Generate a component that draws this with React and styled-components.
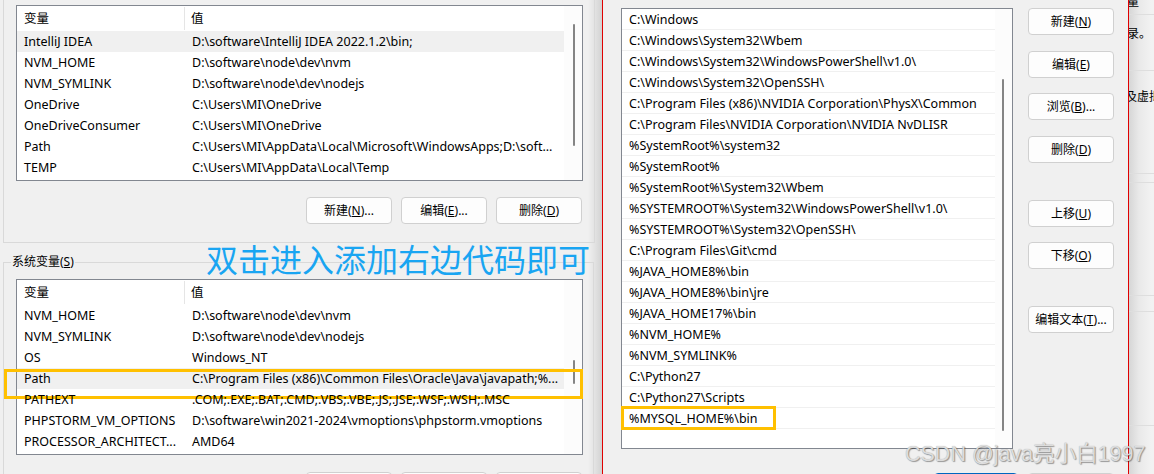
import React from "react";
import styled, { createGlobalStyle } from "styled-components";

const GlobalStyle = createGlobalStyle`
  html, body {
    margin: 0;
    padding: 0;
    background: #f0f0f0;
    overflow: hidden;
  }
  body {
    font-family: "Noto Sans", "Noto Sans CJK SC", sans-serif;
    font-size: 12px;
    color: #000;
  }
`;

const userVars = [
  ["IntelliJ IDEA", "D:\\software\\IntelliJ IDEA 2022.1.2\\bin;"],
  ["NVM_HOME", "D:\\software\\node\\dev\\nvm"],
  ["NVM_SYMLINK", "D:\\software\\node\\dev\\nodejs"],
  ["OneDrive", "C:\\Users\\MI\\OneDrive"],
  ["OneDriveConsumer", "C:\\Users\\MI\\OneDrive"],
  ["Path", "C:\\Users\\MI\\AppData\\Local\\Microsoft\\WindowsApps;D:\\soft..."],
  ["TEMP", "C:\\Users\\MI\\AppData\\Local\\Temp"],
];

const sysVars = [
  ["NVM_HOME", "D:\\software\\node\\dev\\nvm"],
  ["NVM_SYMLINK", "D:\\software\\node\\dev\\nodejs"],
  ["OS", "Windows_NT"],
  ["Path", "C:\\Program Files (x86)\\Common Files\\Oracle\\Java\\javapath;%..."],
  ["PATHEXT", ".COM;.EXE;.BAT;.CMD;.VBS;.VBE;.JS;.JSE;.WSF;.WSH;.MSC"],
  ["PHPSTORM_VM_OPTIONS", "D:\\software\\win2021-2024\\vmoptions\\phpstorm.vmoptions"],
  ["PROCESSOR_ARCHITECT...", "AMD64"],
];

const pathEntries = [
  "C:\\Windows",
  "C:\\Windows\\System32\\Wbem",
  "C:\\Windows\\System32\\WindowsPowerShell\\v1.0\\",
  "C:\\Windows\\System32\\OpenSSH\\",
  "C:\\Program Files (x86)\\NVIDIA Corporation\\PhysX\\Common",
  "C:\\Program Files\\NVIDIA Corporation\\NVIDIA NvDLISR",
  "%SystemRoot%\\system32",
  "%SystemRoot%",
  "%SystemRoot%\\System32\\Wbem",
  "%SYSTEMROOT%\\System32\\WindowsPowerShell\\v1.0\\",
  "%SYSTEMROOT%\\System32\\OpenSSH\\",
  "C:\\Program Files\\Git\\cmd",
  "%JAVA_HOME8%\\bin",
  "%JAVA_HOME8%\\bin\\jre",
  "%JAVA_HOME17%\\bin",
  "%NVM_HOME%",
  "%NVM_SYMLINK%",
  "C:\\Python27",
  "C:\\Python27\\Scripts",
  "%MYSQL_HOME%\\bin",
];

const sideButtons = [
  { text: "新建", key: "N", gap: 0 },
  { text: "编辑", key: "E", gap: 16 },
  { text: "浏览", key: "B", more: true, gap: 15 },
  { text: "删除", key: "D", gap: 16 },
  { text: "上移", key: "U", gap: 37 },
  { text: "下移", key: "O", gap: 15 },
  { text: "编辑文本", key: "T", more: true, gap: 37 },
];

const Screen = styled.div`
  position: relative;
  display: flex;
  width: 1154px;
  height: 474px;
  overflow: hidden;
`;

/* ---------- left window: environment variables ---------- */

const LeftWindow = styled.div`
  flex: none;
  width: 602px;
  padding-left: 3px;
  box-sizing: border-box;
  background: linear-gradient(to right, #f0f0f0 0, #f0f0f0 588px, #e2e2e2 595px, #d2d2d2 602px);
`;

const TopGroup = styled.div`
  width: 592px;
  height: 243px;
  box-sizing: border-box;
  border: 1px solid #d9d9d9;
  border-top: none;
  padding: 5px 0 0 12px;
`;

const SysGroup = styled.fieldset`
  margin: 11px 0 0 0;
  width: 591px;
  min-width: 0;
  box-sizing: border-box;
  border: 1px solid #d9d9d9;
  border-bottom: none;
  padding: 9px 0 0 12px;
`;

const GroupLegend = styled.legend`
  margin-left: -5px;
  padding: 0 1px;
  font-size: 12px;
  line-height: 16px;
`;

const VarList = styled.div`
  display: flex;
  width: 567px;
  height: 176px;
  box-sizing: border-box;
  border: 1px solid #828790;
  background: #fff;
  font-size: 12.5px;
`;

const ListBody = styled.div`
  flex: 1;
  min-width: 0;
`;

const HeaderRow = styled.div`
  display: flex;
  height: 25px;
  align-items: center;
`;

const HeaderCell = styled.div`
  width: ${(p) => (p.$first ? "168px" : "auto")};
  flex: ${(p) => (p.$first ? "none" : "1")};
  padding-left: ${(p) => (p.$first ? "7px" : "6px")};
  box-sizing: border-box;
  height: 23px;
  line-height: 24px;
  border-right: ${(p) => (p.$first ? "1px solid #e5e5e5" : "none")};
`;

const VarRow = styled.div`
  position: relative;
  display: flex;
  height: 21px;
  line-height: 22px;
  background: ${(p) => (p.$selected ? "#f0f0f0" : "transparent")};
  white-space: nowrap;
`;

const NameCell = styled.div`
  flex: none;
  width: 169px;
  padding-left: 7px;
  box-sizing: border-box;
  overflow: hidden;
`;

const ValueCell = styled.div`
  flex: 1;
  padding-left: 6px;
  overflow: hidden;
`;

const Track = styled.div`
  flex: none;
  width: ${(p) => p.$width}px;
  display: flex;
  flex-direction: column;
  padding-left: ${(p) => p.$offset}px;
  box-sizing: border-box;
  background: #fcfcfc;
`;

const Thumb = styled.div`
  width: 2px;
  background: #858585;
  border-radius: 1px;
`;

const Marker = styled.div`
  position: absolute;
  box-sizing: border-box;
  border: 3px solid #ffc000;
  pointer-events: none;
`;

const ButtonRow = styled.div`
  display: flex;
  justify-content: flex-end;
  gap: 9px;
  width: 566px;
  margin-top: ${(p) => p.$top}px;
`;

const Button = styled.button`
  flex: none;
  width: ${(p) => p.$w || 86}px;
  height: 27px;
  margin-top: ${(p) => p.$gap || 0}px;
  padding: 0;
  box-sizing: border-box;
  border: 1px solid ${(p) => (p.$primary ? "#0067c0" : "#d0d0d0")};
  border-radius: 4px;
  background: #fdfdfd;
  font-family: "Noto Sans", "Noto Sans CJK SC", sans-serif;
  font-size: 12px;
  line-height: 25px;
  color: #000;
  text-align: center;
`;

const Key = styled.span`
  text-decoration: underline;
`;

const Label = ({ text, k, more }) => (
  <>
    {text}(<Key>{k}</Key>){more ? "..." : ""}
  </>
);

const VarTable = ({ rows, selected, marked, thumbTop, thumbHeight }) => (
  <VarList>
    <ListBody>
      <HeaderRow>
        <HeaderCell $first>变量</HeaderCell>
        <HeaderCell>值</HeaderCell>
      </HeaderRow>
      {rows.map(([name, value], i) => (
        <VarRow key={name} $selected={i === selected}>
          <NameCell>{name}</NameCell>
          <ValueCell>{value}</ValueCell>
          {i === marked && (
            <Marker style={{ left: -13, top: 1, width: 579, height: 30 }} />
          )}
        </VarRow>
      ))}
    </ListBody>
    <Track $width={18} $offset={9}>
      <Thumb style={{ marginTop: thumbTop, height: thumbHeight }} />
    </Track>
  </VarList>
);

/* ---------- right window: edit Path ---------- */

const RightWindow = styled.div`
  flex: none;
  width: 527px;
  box-sizing: border-box;
  border-left: 1px solid #e00000;
  border-right: 1px solid #e00000;
  padding: 8px 14px 0 18px;
  background: #f0f0f0;
`;

const EditArea = styled.div`
  display: flex;
  gap: 15px;
`;

const PathList = styled.div`
  display: flex;
  width: 392px;
  height: 441px;
  box-sizing: border-box;
  border: 1px solid #828790;
  background: #fff;
  font-size: 12.5px;
`;

const PathRow = styled.div`
  position: relative;
  height: 21px;
  box-sizing: border-box;
  border-bottom: 1px solid #f0f0f0;
  padding-left: 7px;
  line-height: 21px;
  white-space: nowrap;
`;

const SideButtons = styled.div`
  display: flex;
  flex-direction: column;
`;

const Footer = styled.div`
  display: flex;
  justify-content: flex-end;
  gap: 10px;
  margin-top: 24px;
`;

/* ---------- window peeking in at the right ---------- */

const Peek = styled.div`
  flex: 1;
  overflow: hidden;
  background: linear-gradient(to right, #d6d6d6 0, #e9e9e9 10px, #f2f2f2 22px);
`;

const PeekBand = styled.div`
  height: ${(p) => p.$h}px;
  box-sizing: border-box;
  overflow: hidden;
  border-bottom: 1px solid #dedede;
`;

const PeekText = styled.div`
  margin: ${(p) => p.$top}px 0 0 ${(p) => p.$left}px;
  white-space: nowrap;
  font-size: 12px;
  line-height: 16px;
`;

/* ---------- overlays ---------- */

const Annotation = styled.div`
  position: absolute;
  left: 206px;
  top: 238px;
  font-family: "Noto Sans CJK SC", sans-serif;
  font-size: 32px;
  line-height: 40px;
  color: #19a5f2;
  white-space: nowrap;
`;

const Watermark = styled.div`
  position: absolute;
  left: 905px;
  top: 441px;
  font-family: "Liberation Sans", "Noto Sans CJK SC", sans-serif;
  font-size: 21.5px;
  line-height: 26px;
  color: rgba(226, 226, 226, 0.95);
  text-shadow: 1px 1px 1px rgba(0, 0, 0, 0.35), 0 0 1px rgba(0, 0, 0, 0.3);
  white-space: nowrap;
`;

export default function App() {
  return (
    <>
      <GlobalStyle />
      <Screen>
        <LeftWindow>
          <TopGroup>
            <VarTable rows={userVars} selected={0} thumbTop={18} thumbHeight={122} />
            <ButtonRow $top={16}>
              <Button><Label text="新建" k="N" more /></Button>
              <Button><Label text="编辑" k="E" more /></Button>
              <Button><Label text="删除" k="D" /></Button>
            </ButtonRow>
          </TopGroup>
          <SysGroup>
            <GroupLegend>系统变量(<Key>S</Key>)</GroupLegend>
            <VarTable rows={sysVars} selected={3} marked={3} thumbTop={80} thumbHeight={24} />
            <ButtonRow $top={17}>
              <Button aria-label="新建(W)..." />
              <Button aria-label="编辑(I)..." />
              <Button aria-label="删除(L)" />
            </ButtonRow>
          </SysGroup>
        </LeftWindow>

        <RightWindow>
          <EditArea>
            <PathList>
              <ListBody>
                {pathEntries.map((p, i) => (
                  <PathRow key={p}>
                    {p}
                    {i === pathEntries.length - 1 && (
                      <Marker style={{ left: -1, top: -2, width: 155, height: 24 }} />
                    )}
                  </PathRow>
                ))}
              </ListBody>
              <Track $width={17} $offset={7}>
                <Thumb style={{ marginTop: 70, height: 352 }} />
              </Track>
            </PathList>
            <SideButtons>
              {sideButtons.map((b) => (
                <Button key={b.key} $gap={b.gap}>
                  <Label text={b.text} k={b.key} more={b.more} />
                </Button>
              ))}
            </SideButtons>
          </EditArea>
          <Footer>
            <Button $primary $w={84} aria-label="确定" />
            <Button $w={86} aria-label="取消" />
          </Footer>
        </RightWindow>

        <Peek>
          <PeekBand $h={15}>
            <PeekText $top={-6} $left={-14}>变量</PeekText>
          </PeekBand>
          <PeekBand $h={56}>
            <PeekText $top={11} $left={-14}>目录。</PeekText>
          </PeekBand>
          <PeekBand $h={103}>
            <PeekText $top={18} $left={-16}>以及虚拟</PeekText>
          </PeekBand>
          <PeekBand $h={9} />
          <PeekBand $h={113} />
          <PeekBand $h={16} />
          <PeekBand $h={114} />
        </Peek>

        <Annotation>双击进入添加右边代码即可</Annotation>
        <Watermark>CSDN @java亮小白1997</Watermark>
      </Screen>
    </>
  );
}
